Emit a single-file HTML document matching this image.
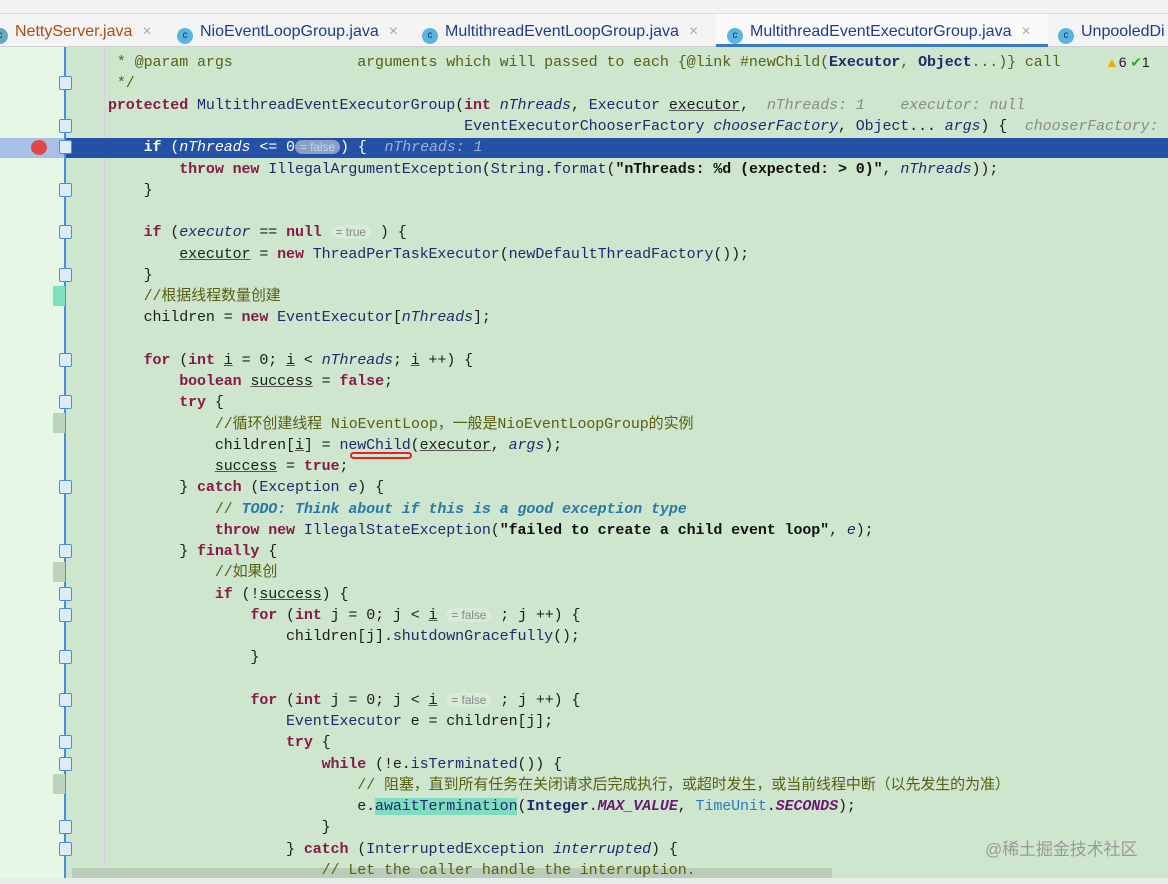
<!DOCTYPE html>
<html><head><meta charset="utf-8"><style>
*{margin:0;padding:0;box-sizing:border-box}
body{width:1168px;height:884px;overflow:hidden;background:#cde6cd;position:relative;font-family:"Liberation Mono","Noto Sans CJK SC",monospace;font-size:15px}
.top{position:absolute;left:0;top:0;width:1168px;height:14px;background:#f2f2f2;border-bottom:1px solid #ddd;overflow:hidden}
.tabs{position:absolute;left:0;top:14px;width:1168px;height:33px;background:#f4f4f4;border-bottom:1px solid #d0d0d0;font-family:"Liberation Sans",sans-serif;font-size:16px;color:#1f3b8c}
.tab{position:absolute;top:0;height:33px;line-height:36px;white-space:nowrap}
.tab .ic{display:inline-block;width:16px;height:16px;border-radius:50%;background:#5ab4e0;color:#1a3060;font-size:10px;line-height:16px;text-align:center;vertical-align:-2px;margin-right:7px}
.tab .x{color:#aaa;margin-left:10px}
.gut{position:absolute;left:0;top:47px;width:65px;height:837px;background:#e6f7e6}
.fold{position:absolute;left:64px;top:47px;width:2px;height:837px;background:#4a8de0}
.guide{position:absolute;left:104px;top:47px;width:1px;height:837px;background:#d8cfe0}
.ln{position:absolute;left:0;height:21px;line-height:21px;white-space:pre;color:#1c1c1c;letter-spacing:-0.1px}
.fi{position:absolute;left:59px;width:13px;height:14px;border:1.5px solid #4a8de0;background:#dcecf8;border-radius:2px}
.hl{position:absolute;left:65px;top:138px;width:1103px;height:20px;background:#2450a6}
.hlg{position:absolute;left:0;top:138px;width:65px;height:20px;background:#a8c0e6}
.k{color:#871a46;font-weight:bold}
.t{color:#1f2a6e}
.c{color:#5a5f14}
.v{color:#1f2a6e;font-style:italic}
.s{color:#111;font-weight:bold}
.h{color:#8a8a8a;font-style:italic}
.todo{color:#2a78a8;font-style:italic;font-weight:bold}
.u{text-decoration:underline;text-decoration-color:#555}
.pill{background:#d8ead8;color:#888;font-family:"Liberation Sans",sans-serif;font-size:12px;border-radius:8px;padding:0 5px}
.mk{position:absolute;left:53px;width:12px;height:20px;background:#bcd4bc}
</style></head><body>
<div class="top"></div>
<div class="tabs">
<div class="tab" style="left:-8px"><span class="ic" style="background:#6ab;">c</span><span style="color:#b04a10">NettyServer.java</span><span class="x">×</span></div>
<div class="tab" style="left:177px"><span class="ic">c</span>NioEventLoopGroup.java<span class="x">×</span></div>
<div class="tab" style="left:422px"><span class="ic">c</span>MultithreadEventLoopGroup.java<span class="x">×</span></div>
<div class="tab" style="left:716px;width:332px;background:#fafafa;padding-left:11px;border-bottom:3px solid #3b78c8"><span class="ic">c</span>MultithreadEventExecutorGroup.java<span class="x">×</span></div>
<div class="tab" style="left:1058px"><span class="ic">c</span>UnpooledDi</div>
</div>
<div class="gut"></div>
<div class="guide"></div>
<div class="hlg"></div>
<div class="hl"></div>
<div class="fold"></div>
<div style="position:absolute;left:31px;top:140px;width:16px;height:15px;border-radius:50%;background:#e04848"></div>
<div class="mk" style="top:286px;background:#7ee0c0"></div>
<div class="mk" style="top:413px"></div>
<div class="mk" style="top:562px"></div>
<div class="mk" style="top:774px"></div>
<div class="fi" style="top:76px"></div><div class="fi" style="top:119px"></div><div class="fi" style="top:140px"></div>
<div class="fi" style="top:183px"></div><div class="fi" style="top:225px"></div><div class="fi" style="top:268px"></div>
<div class="fi" style="top:353px"></div><div class="fi" style="top:395px"></div><div class="fi" style="top:480px"></div>
<div class="fi" style="top:544px"></div><div class="fi" style="top:587px"></div><div class="fi" style="top:608px"></div>
<div class="fi" style="top:650px"></div><div class="fi" style="top:693px"></div><div class="fi" style="top:735px"></div>
<div class="fi" style="top:757px"></div><div class="fi" style="top:820px"></div><div class="fi" style="top:842px"></div>

<div class="ln" style="top:52px;left:108px"><span class="c"> * @param args              arguments which will passed to each {@link #newChild(<b class="t">Executor</b>, <b class="t">Object</b>...)} call</span></div>
<div class="ln" style="top:52px;left:1105px;font-family:'Liberation Sans';font-size:14px"><span style="color:#e8b000">▲</span>6 <span style="color:#3a3">✔</span>1</div>
<div class="ln" style="top:73px;left:108px"><span class="c"> */</span></div>
<div class="ln" style="top:95px;left:108px"><span class="k">protected</span> <span class="t">MultithreadEventExecutorGroup</span>(<span class="k">int</span> <span class="v">nThreads</span>, <span class="t">Executor</span> <span class="u">executor</span>,  <span class="h">nThreads: 1    executor: null</span></div>
<div class="ln" style="top:116px;left:108px">                                        <span class="t">EventExecutorChooserFactory</span> <span class="v">chooserFactory</span>, <span class="t">Object</span>... <span class="v">args</span>) {  <span class="h">chooserFactory:</span></div>
<div class="ln" style="top:137px;left:108px;color:#fff">    <b>if</b> (<i>nThreads</i> &lt;= 0<span class="pill" style="background:#8aa0c8;color:#c8d4ea">= false</span>) {  <i style="color:#9db0d8">nThreads: 1</i></div>
<div class="ln" style="top:159px;left:108px">        <span class="k">throw new</span> <span class="t">IllegalArgumentException</span>(<span class="t">String</span>.<span class="t">format</span>(<span class="s">"nThreads: %d (expected: &gt; 0)"</span>, <span class="v">nThreads</span>));</div>
<div class="ln" style="top:180px;left:108px">    }</div>
<div class="ln" style="top:222px;left:108px">    <span class="k">if</span> (<span class="v">executor</span> == <span class="k">null</span> <span class="pill">= true</span> ) {</div>
<div class="ln" style="top:244px;left:108px">        <span class="u">executor</span> = <span class="k">new</span> <span class="t">ThreadPerTaskExecutor</span>(<span class="t">newDefaultThreadFactory</span>());</div>
<div class="ln" style="top:265px;left:108px">    }</div>
<div class="ln" style="top:286px;left:108px">    <span class="c">//根据线程数量创建</span></div>
<div class="ln" style="top:307px;left:108px">    children = <span class="k">new</span> <span class="t">EventExecutor</span>[<span class="v">nThreads</span>];</div>
<div class="ln" style="top:350px;left:108px">    <span class="k">for</span> (<span class="k">int</span> <span class="u">i</span> = 0; <span class="u">i</span> &lt; <span class="v">nThreads</span>; <span class="u">i</span> ++) {</div>
<div class="ln" style="top:371px;left:108px">        <span class="k">boolean</span> <span class="u">success</span> = <span class="k">false</span>;</div>
<div class="ln" style="top:392px;left:108px">        <span class="k">try</span> {</div>
<div class="ln" style="top:414px;left:108px">            <span class="c">//循环创建线程 NioEventLoop，一般是NioEventLoopGroup的实例</span></div>
<div class="ln" style="top:435px;left:108px">            children[<span class="u">i</span>] = <span class="t">newChild</span>(<span class="u">executor</span>, <span class="v">args</span>);</div>
<div style="position:absolute;left:350px;top:452px;width:62px;height:7px;border:2.5px solid #e8231c;border-radius:4px"></div>
<div class="ln" style="top:456px;left:108px">            <span class="u">success</span> = <span class="k">true</span>;</div>
<div class="ln" style="top:477px;left:108px">        } <span class="k">catch</span> (<span class="t">Exception</span> <span class="v">e</span>) {</div>
<div class="ln" style="top:499px;left:108px">            <span class="c">// </span><span class="todo">TODO: Think about if this is a good exception type</span></div>
<div class="ln" style="top:520px;left:108px">            <span class="k">throw new</span> <span class="t">IllegalStateException</span>(<span class="s">"failed to create a child event loop"</span>, <span class="v">e</span>);</div>
<div class="ln" style="top:541px;left:108px">        } <span class="k">finally</span> {</div>
<div class="ln" style="top:562px;left:108px">            <span class="c">//如果创</span></div>
<div class="ln" style="top:584px;left:108px">            <span class="k">if</span> (!<span class="u">success</span>) {</div>
<div class="ln" style="top:605px;left:108px">                <span class="k">for</span> (<span class="k">int</span> j = 0; j &lt; <span class="u">i</span> <span class="pill">= false</span> ; j ++) {</div>
<div class="ln" style="top:626px;left:108px">                    children[j].<span class="t">shutdownGracefully</span>();</div>
<div class="ln" style="top:647px;left:108px">                }</div>
<div class="ln" style="top:690px;left:108px">                <span class="k">for</span> (<span class="k">int</span> j = 0; j &lt; <span class="u">i</span> <span class="pill">= false</span> ; j ++) {</div>
<div class="ln" style="top:711px;left:108px">                    <span class="t">EventExecutor</span> e = children[j];</div>
<div class="ln" style="top:732px;left:108px">                    <span class="k">try</span> {</div>
<div class="ln" style="top:754px;left:108px">                        <span class="k">while</span> (!e.<span class="t">isTerminated</span>()) {</div>
<div class="ln" style="top:775px;left:108px">                            <span class="c">// 阻塞，直到所有任务在关闭请求后完成执行，或超时发生，或当前线程中断（以先发生的为准）</span></div>
<div class="ln" style="top:796px;left:108px">                            e.<span class="t" style="background:#7edcc0">awaitTermination</span>(<span class="t" style="font-weight:bold">Integer</span>.<span class="v" style="color:#6a1a70;font-weight:bold">MAX_VALUE</span>, <span style="color:#2a78c8">TimeUnit</span>.<span class="v" style="color:#6a1a70;font-weight:bold">SECONDS</span>);</div>
<div class="ln" style="top:817px;left:108px">                        }</div>
<div class="ln" style="top:839px;left:108px">                    } <span class="k">catch</span> (<span class="t">InterruptedException</span> <span class="v">interrupted</span>) {</div>
<div style="position:absolute;left:72px;top:868px;width:760px;height:10px;background:#b8ccb8"></div>
<div class="ln" style="top:860px;left:108px">                        <span class="c">// Let the caller handle the interruption.</span></div>
<div class="ln" style="top:839px;left:985px;font-family:'Liberation Sans','Noto Sans CJK SC',sans-serif;font-size:17px;color:#999">@稀土掘金技术社区</div>
<div style="position:absolute;left:0;top:878px;width:1168px;height:6px;background:#e8ece8"></div>
</body></html>
